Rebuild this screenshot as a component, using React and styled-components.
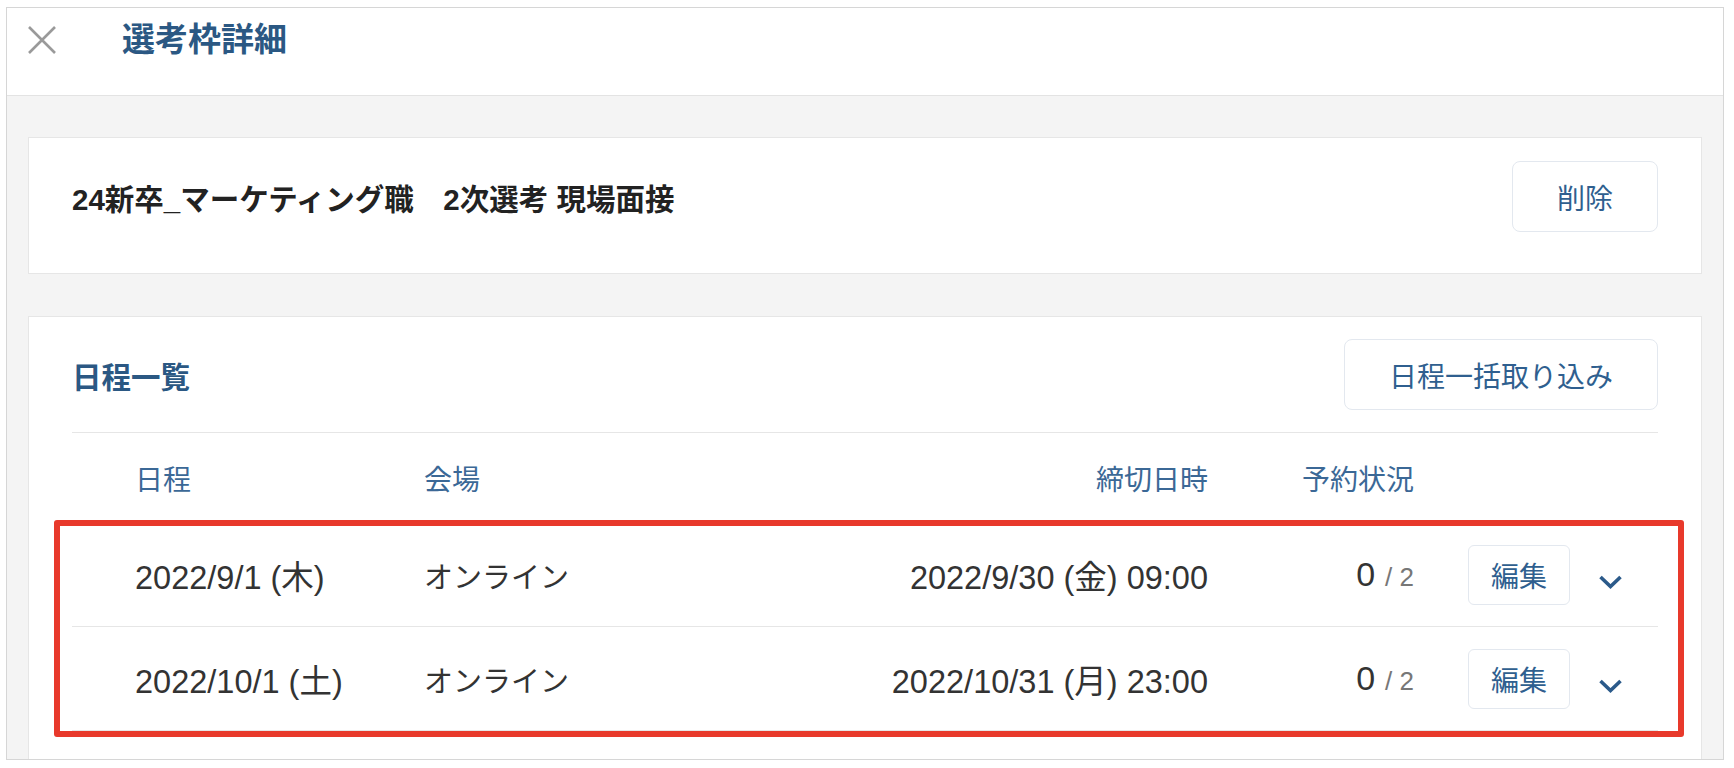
import React from "react";
import styled, { createGlobalStyle } from "styled-components";

const GlobalStyle = createGlobalStyle`
  body {
    margin: 0;
    background: #fff;
    font-family: "Liberation Sans", "Noto Sans CJK JP", sans-serif;
    color: #333;
  }
`;

const Frame = styled.div`
  margin: 7px 0 0 6px;
  width: 1716px;
  height: 751px;
  border: 1px solid #d6d6d6;
  overflow: hidden;
  display: flex;
  flex-direction: column;
`;

const Header = styled.header`
  height: 88px;
  flex-shrink: 0;
  box-sizing: border-box;
  display: flex;
  align-items: flex-start;
  gap: 65px;
  padding: 12px 20px 0;
  background: #fff;
  border-bottom: 1px solid #e3e3e3;
`;

const CloseButton = styled.button`
  width: 30px;
  height: 40px;
  padding: 0;
  border: none;
  background: none;
  display: flex;
  align-items: center;
  justify-content: center;
  cursor: pointer;
`;

const Title = styled.h1`
  margin: 0;
  font-size: 33px;
  line-height: 40px;
  font-weight: 700;
  color: #2b5883;
`;

const Content = styled.main`
  flex: 1;
  min-height: 0;
  background: #f4f4f4;
  padding: 41px 21px 0;
  display: flex;
  flex-direction: column;
  gap: 42px;
`;

const Card = styled.section`
  background: #fff;
  border: 1px solid #e6e6e6;
  ${(p) => (p.$fill ? "flex: 1; border-bottom: none;" : "")}
  padding: ${(p) => (p.$fill ? "22px 43px 0" : "23px 43px 41px")};
`;

const CardHead = styled.div`
  display: flex;
  align-items: center;
  justify-content: space-between;
`;

const CardTitle = styled.h2`
  margin: 0;
  font-size: 29.5px;
  font-weight: 700;
  color: ${(p) => (p.$blue ? "#2b5883" : "#222")};
`;

const OutlineButton = styled.button`
  height: ${(p) => (p.$small ? "60px" : "71px")};
  padding: 0 ${(p) => (p.$small ? "22px" : "44px")};
  background: #fff;
  border: 1px solid #e3e8ef;
  border-radius: ${(p) => (p.$small ? "6px" : "8px")};
  font-family: inherit;
  font-size: 28px;
  color: #2f5f8f;
  cursor: pointer;
`;

const Table = styled.div`
  margin-top: 22px;
  border-top: 1px solid #e6e6e6;
`;

const Row = styled.div`
  display: grid;
  grid-template-columns: 289px 1fr 340px 206px 156px 53px;
  align-items: center;
  padding: 0 35px 0 63px;
  height: ${(p) => (p.$head ? "90px" : "103px")};
  border-bottom: ${(p) => (p.$head ? "none" : "1px solid #e6e6e6")};
  font-size: ${(p) => (p.$head ? "28px" : "29px")};
  color: ${(p) => (p.$head ? "#3b6896" : "#333")};
`;

const Cell = styled.div`
  white-space: nowrap;
  text-align: ${(p) => (p.$right ? "right" : "left")};
  justify-self: ${(p) => (p.$end ? "end" : "stretch")};
`;

const DateText = styled.span`
  font-size: 32.5px;
`;

const Booked = styled.span`
  font-size: 34px;
  color: #333;
`;

const Capacity = styled.span`
  font-size: 26px;
  color: #777;
  margin-left: 10px;
`;

const Toggle = styled.button`
  justify-self: end;
  width: 25px;
  height: 16px;
  margin-top: 14px;
  padding: 0;
  border: none;
  background: none;
  display: flex;
  cursor: pointer;
`;

const HighlightGroup = styled.div`
  position: relative;
`;

const Highlight = styled.div`
  position: absolute;
  top: -3px;
  bottom: -6px;
  left: -18px;
  right: -26px;
  border: 6px solid #e8392b;
  border-radius: 3px;
  pointer-events: none;
`;

const schedules = [
  { date: "2022/9/1 (木)", venue: "オンライン", deadline: "2022/9/30 (金) 09:00", booked: 0, cap: 2 },
  { date: "2022/10/1 (土)", venue: "オンライン", deadline: "2022/10/31 (月) 23:00", booked: 0, cap: 2 },
];

function ScheduleRow({ item }) {
  return (
    <Row>
      <Cell>
        <DateText>{item.date}</DateText>
      </Cell>
      <Cell>{item.venue}</Cell>
      <Cell $right>
        <DateText>{item.deadline}</DateText>
      </Cell>
      <Cell $right>
        <Booked>{item.booked}</Booked>
        <Capacity>/ {item.cap}</Capacity>
      </Cell>
      <Cell $end>
        <OutlineButton $small>編集</OutlineButton>
      </Cell>
      <Toggle aria-label="開く">
        <svg width="25" height="16" viewBox="0 0 25 16">
          <polyline points="2.5,3 12.5,12.5 22.5,3" fill="none" stroke="#2b5a8a" strokeWidth="3.6" />
        </svg>
      </Toggle>
    </Row>
  );
}

export default function App() {
  return (
    <>
      <GlobalStyle />
      <Frame>
        <Header>
          <CloseButton aria-label="閉じる">
            <svg width="30" height="30" viewBox="0 0 30 30">
              <path d="M2 2 L28 28 M28 2 L2 28" stroke="#9a9a9a" strokeWidth="2.6" />
            </svg>
          </CloseButton>
          <Title>選考枠詳細</Title>
        </Header>
        <Content>
          <Card>
            <CardHead>
              <CardTitle>24新卒_マーケティング職　2次選考 現場面接</CardTitle>
              <OutlineButton>削除</OutlineButton>
            </CardHead>
          </Card>
          <Card $fill>
            <CardHead>
              <CardTitle $blue>日程一覧</CardTitle>
              <OutlineButton>日程一括取り込み</OutlineButton>
            </CardHead>
            <Table>
              <Row $head>
                <Cell>日程</Cell>
                <Cell>会場</Cell>
                <Cell $right>締切日時</Cell>
                <Cell $right>予約状況</Cell>
                <Cell />
                <Cell />
              </Row>
              <HighlightGroup>
                {schedules.map((s) => (
                  <ScheduleRow key={s.date} item={s} />
                ))}
                <Highlight />
              </HighlightGroup>
            </Table>
          </Card>
        </Content>
      </Frame>
    </>
  );
}
